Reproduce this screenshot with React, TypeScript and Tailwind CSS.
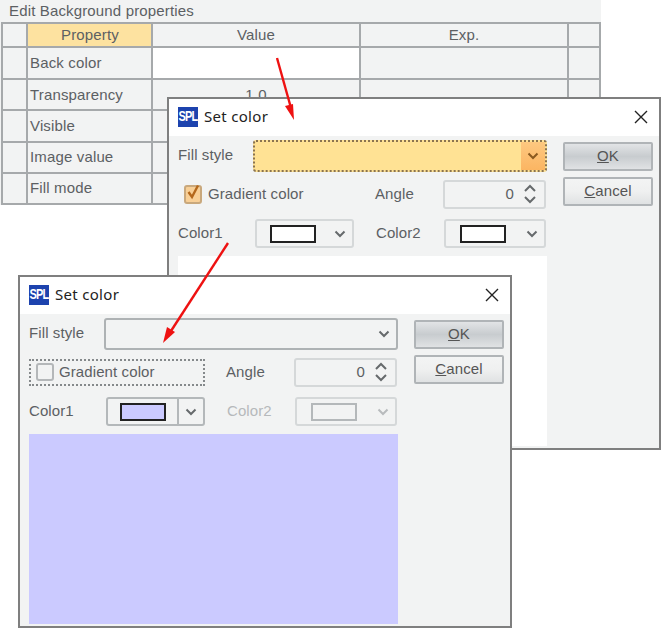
const FONT = "font-['Liberation_Sans',Arial,sans-serif]"

const ROWS = [
  { name: 'Back color', value: '', h: 'h-[32px]', nudge: 'pt-[1px]' },
  { name: 'Transparency', value: '1.0', h: 'h-[31px]', nudge: 'pt-[1px]' },
  { name: 'Visible', value: '', h: 'h-[32px]', nudge: '' },
  { name: 'Image value', value: '', h: 'h-[31px]', nudge: '' },
  { name: 'Fill mode', value: '', h: 'h-[31px]', nudge: '' },
]

const cell = 'border-r-2 border-b-2 border-[#a6a9ab] flex items-center'

function Chevron({ color = '#666a6c' }: { color?: string }) {
  return (
    <svg width="12" height="8" viewBox="0 0 12 8" fill="none">
      <path d="M1.5 1.5 L6 6 L10.5 1.5" stroke={color} strokeWidth="2" />
    </svg>
  )
}

function Logo() {
  return (
    <div className="w-[20px] h-[20px] bg-[#1d43ae] flex items-center justify-center overflow-hidden">
      <span className="text-white text-[11px] font-bold tracking-[-0.8px] leading-none scale-y-125">SPL</span>
    </div>
  )
}

function ColorCombo({ swatch, disabled, split }: { swatch: string; disabled?: boolean; split?: boolean }) {
  return (
    <div className={`h-[29px] w-full flex items-center rounded-[3px] border-2 ${split ? 'border-[#b4b8ba]' : 'border-[#d5d8d9]'}`}>
      <div className={`flex-1 h-full flex items-center justify-center ${split ? 'border-r-2 border-[#b4b8ba]' : ''}`}>
        <div className={`w-[46px] h-[18px] border-2 ${disabled ? 'border-[#b4b8ba]' : 'border-[#222]'} ${swatch}`} />
      </div>
      <div className="w-[24px] flex justify-center">
        <Chevron color={disabled ? '#b8bbbd' : '#666a6c'} />
      </div>
    </div>
  )
}

function Dialog({ active, className }: { active: boolean; className: string }) {
  return (
    <div className={`absolute w-[494px] h-[353px] border-2 border-[#7f7f7f] bg-[#f2f3f3] flex flex-col ${className}`}>
      <div className="h-[37px] bg-white flex items-center pl-[9px] pr-[11px] pb-[2px] shrink-0">
        <Logo />
        <span className="ml-[6px] text-[15px] text-[#222] font-['Noto_Sans',sans-serif] tracking-[0.3px]">Set color</span>
        <svg className="ml-auto" width="14" height="14" viewBox="0 0 14 14" fill="none">
          <path d="M1 1 L13 13 M13 1 L1 13" stroke="#222" strokeWidth="1.4" />
        </svg>
      </div>
      <div className="flex-1 flex pl-[9px] pt-[3px] text-[#5c6063] text-[15px] tracking-[0.1px]">
        <div className="w-[369px] flex flex-col">
          <div className="flex items-center h-[33px]">
            <span className="w-[75px]">Fill style</span>
            {active ? (
              <div className="flex-1 h-[32px] rounded-[3px] border-2 border-dotted border-[#8a7350] bg-[#ffe294] flex justify-end">
                <div className="w-[24px] bg-gradient-to-b from-[#fdc880] to-[#fbb562] flex items-center justify-center">
                  <Chevron color="#8a5a20" />
                </div>
              </div>
            ) : (
              <div className="flex-1 h-[32px] rounded-[3px] border-2 border-[#aeb2b4] flex items-center justify-end pr-[6px]">
                <Chevron />
              </div>
            )}
          </div>
          <div className="flex items-center h-[30px] mt-[7px]">
            <div className={`w-[176px] h-[27px] flex items-center ${active ? 'pl-[4px] border-2 border-transparent' : 'pl-[5px] border-2 border-dotted border-[#85898b]'}`}>
              {active ? (
                <div className="w-[18px] h-[19px] rounded-[3px] border-2 border-[#c9a87c] bg-[#f8cf96] flex items-center justify-center">
                  <svg width="14" height="16" viewBox="0 0 14 16" fill="none" className="-mt-[4px]">
                    <path d="M2.5 8 L6 13 L12 1.5" stroke="#b4681c" strokeWidth="2.4" />
                  </svg>
                </div>
              ) : (
                <div className="w-[18px] h-[18px] rounded-[3px] border-2 border-[#b4b7b9] bg-[#f2f3f3]" />
              )}
              <span className={active ? 'ml-[6px]' : 'ml-[5px]'}>Gradient color</span>
            </div>
            <span className="ml-[21px] w-[68px]">Angle</span>
            <div className="w-[103px] h-[29px] rounded-[3px] border-2 border-[#d5d8d9] flex items-center justify-end pr-[7px]">
              <span className="mr-[9px]">0</span>
              <svg width="14" height="22" viewBox="0 0 14 22" fill="none">
                <path d="M2 8 L7 3 L12 8 M2 14 L7 19 L12 14" stroke="#666a6c" strokeWidth="2" />
              </svg>
            </div>
          </div>
          <div className="flex items-center h-[29px] mt-[10px]">
            <span className="w-[77px]">Color1</span>
            <div className="w-[99px]">
              <ColorCombo swatch={active ? 'bg-white' : 'bg-[#cbcaff]'} split={!active} />
            </div>
            <span className={`ml-[22px] w-[68px] ${active ? '' : 'text-[#b6b9bb]'}`}>Color2</span>
            <div className="w-[102px]">
              <ColorCombo swatch={active ? 'bg-white' : 'bg-[#f2f3f3]'} disabled={!active} />
            </div>
          </div>
          <div className={`mt-[8px] h-[190px] ${active ? 'bg-white' : 'bg-[#cbcaff]'}`} />
        </div>
        <div className="ml-[16px] w-[90px] flex flex-col gap-[6px] pt-[3px] text-[#555]">
          <button className="h-[29px] rounded-[2px] border-2 border-[#b0b4b7] bg-gradient-to-b from-[#e2e4e6] via-[#c8cccf] to-[#e0e2e4]">
            <span className="underline">O</span>K
          </button>
          <button className="h-[29px] rounded-[2px] border-2 border-[#b0b4b7] bg-gradient-to-b from-[#f3f4f4] via-[#eff0f0] to-[#e0e2e3]">
            <span className="underline">C</span>ancel
          </button>
        </div>
      </div>
    </div>
  )
}

export default function App() {
  return (
    <div className={`relative w-[661px] h-[629px] bg-white overflow-hidden ${FONT}`}>
      {/* property table behind the dialogs */}
      <div className="w-[601px] h-[205px] bg-[#f2f3f3] text-[#5c6063] text-[15px] tracking-[0.15px]">
        <div className="h-[22px] pl-[9px] flex items-center">Edit Background properties</div>
        <div className="ml-[1px] w-[600px] border-t-2 border-l-2 border-[#a6a9ab] grid grid-cols-[25px_125px_208px_208px_1fr]">
          <div className={`${cell} h-[24px]`} />
          <div className={`${cell} h-[24px] pt-[1px] pl-[1px] justify-center bg-[#fde2a0]`}>Property</div>
          <div className={`${cell} h-[24px] pt-[1px] justify-center`}>Value</div>
          <div className={`${cell} h-[24px] pt-[1px] justify-center`}>Exp.</div>
          <div className={`${cell} h-[24px]`} />
          {ROWS.map((r, i) => (
            <div key={r.name} className="contents">
              <div className={`${cell} ${r.h}`} />
              <div className={`${cell} ${r.h} ${r.nudge} pl-[2px]`}>{r.name}</div>
              <div className={`${cell} ${r.h} ${r.nudge} justify-center ${i === 0 ? 'bg-white' : ''}`}>{r.value}</div>
              <div className={`${cell} ${r.h}`} />
              <div className={`${cell} ${r.h}`} />
            </div>
          ))}
        </div>
      </div>

      <Dialog active className="left-[167px] top-[97px]" />
      <Dialog active={false} className="left-[18px] top-[275px]" />

      {/* red annotation arrows */}
      <svg className="absolute left-0 top-0 pointer-events-none" width="661" height="629" viewBox="0 0 661 629" fill="none">
        <path d="M277 58 L291 108" stroke="#ee1111" strokeWidth="2.4" />
        <path d="M294 120 L285 106 L293 104 Z" fill="#ee1111" />
        <path d="M228 243 L171 331" stroke="#ee1111" strokeWidth="2.4" />
        <path d="M163 343 L167 327 L175 332 Z" fill="#ee1111" />
      </svg>
    </div>
  )
}
